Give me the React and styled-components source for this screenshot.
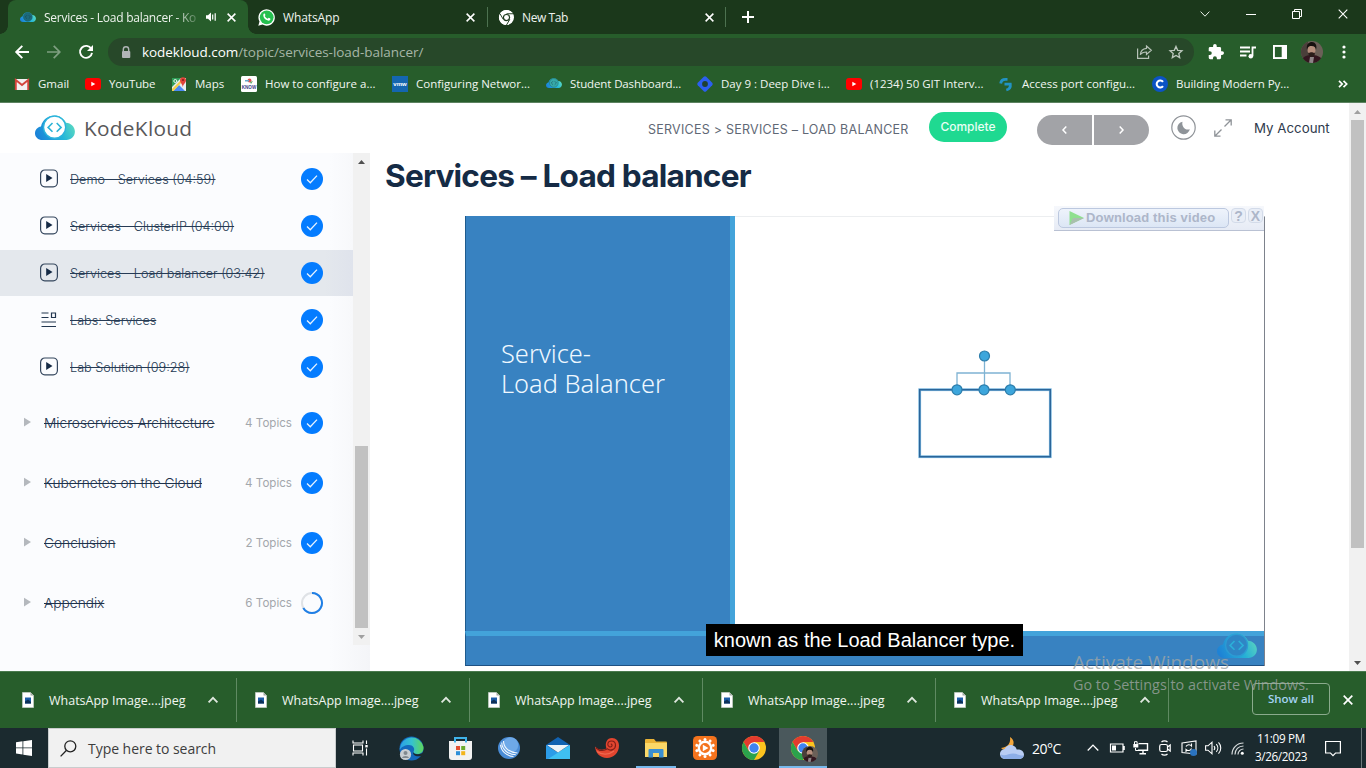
import React, { useId } from "react";
import styled, { createGlobalStyle, css } from "styled-components";

const Global = createGlobalStyle`
  * { box-sizing: border-box; }
  html, body { margin: 0; padding: 0; overflow: hidden; }
  svg { display: block; flex: none; overflow: visible; }
`;

const ui = `"Open Sans", "Noto Sans", sans-serif`;
const web = `Inter, "Liberation Sans", sans-serif`;

const Screen = styled.div`
  width: 1366px;
  height: 768px;
  display: flex;
  flex-direction: column;
  background: #fff;
  font-family: ${ui};
  font-size: 12px;
  overflow: hidden;
`;

const Txt = styled.span`
  white-space: nowrap;
  letter-spacing: ${(p) => p.$ls || 0}px;
`;

const Cell = styled.div`
  width: ${(p) => p.$w}px;
  flex: none;
  display: flex;
  align-items: center;
  justify-content: center;
`;

/* ---------- shared drawings ---------- */

function Cloud({ w = 40, ring = "#fff", code = "#2bb3d6", edge = "#2bb3dc" }) {
  const id = useId().replace(/[^a-zA-Z0-9]/g, "");
  return (
    <svg width={w} height={w * 0.64} viewBox="0 0 40 25.6">
      <defs>
        <linearGradient id={id} x1="0" x2="1" y1="0.6" y2="0.3">
          <stop offset="0" stopColor="#1c83d8" />
          <stop offset="0.55" stopColor="#23b5d9" />
          <stop offset="1" stopColor="#5fdcbf" />
        </linearGradient>
      </defs>
      <path
        d="M7.5 25C3 25 0 22 0 18.2c0-3.600 2.600-6.200 6-6.700C7.500 5 12.800.6 19.400.6c5.200 0 9.400 2.700 11.600 7.200 5 .3 8.900 4 8.900 8.700 0 4.900-3.700 8.500-8.500 8.500z"
        fill={`url(#${id})`}
      />
      <circle cx="19.600" cy="12.200" r="11" fill={ring} stroke={edge} strokeWidth="1.200" />
      <path d="M17.500 8l-4.400 4.400 4.400 4.400M21.700 8l4.400 4.400-4.400 4.400" fill="none" stroke={code} strokeWidth="1.600" />
    </svg>
  );
}

const Cross = ({ s = 9, c = "#fff", w = 1.7 }) => (
  <svg width={s} height={s} viewBox="0 0 10 10">
    <path d="M.7.7l8.600 8.600M9.300.7L.7 9.300" stroke={c} strokeWidth={w} fill="none" />
  </svg>
);

const Chevron = ({ w = 10, c = "#dfe8df", sw = 1.8, down }) => (
  <svg width={w} height={w * 0.6} viewBox="0 0 10 6">
    <path d={down ? "M.6.6L5 5.200 9.400.6" : "M.6 5.400L5 .9l4.400 4.500"} stroke={c} strokeWidth={sw} fill="none" />
  </svg>
);

const Chrome = ({ s = 24, mono }) => {
  const [r, g, y, b, w] = mono
    ? ["#fff", "#fff", "#fff", "#fff", "#1b381b"]
    : ["#e33b2e", "#2ba24c", "#fcc31e", "#3f83f1", "#fff"];
  return (
    <svg width={s} height={s} viewBox="0 0 24 24">
      <circle cx="12" cy="12" r="12" fill={y} />
      <path d="M12 12V6h10.400A12 12 0 0 0 1.600 6l5.200 9z" fill={r} />
      <path d="M12 12L6.800 15 1.600 6A12 12 0 0 0 12 24l5.200-9z" fill={g} />
      {mono && <path d="M12 6h10.400M6.800 15L1.600 6M17.200 15L12 24" stroke={w} strokeWidth="1.500" />}
      <circle cx="12" cy="12" r="5.800" fill={w} />
      <circle cx="12" cy="12" r={mono ? 3.900 : 4.700} fill={b} />
    </svg>
  );
};

const Face = ({ s }) => {
  const id = useId().replace(/[^a-zA-Z0-9]/g, "");
  return (
    <svg width={s} height={s} viewBox="0 0 22 22">
      <clipPath id={id}>
        <circle cx="11" cy="11" r="11" />
      </clipPath>
      <g clipPath={`url(#${id})`}>
        <path d="M0 0h22v22H0z" fill="#6b6058" />
        <path d="M0 0h7v22H0z" fill="#4a3f3a" />
        <path d="M0 22c1-6 5-8 10-8s10 1 12 6v2z" fill="#33161f" />
        <path d="M8 22l1-6h4l-1 6z" fill="#8e8588" />
        <ellipse cx="10.500" cy="9" rx="4" ry="5.500" fill="#b58e7c" />
        <path d="M6 9C5 3 8 1 11 1s5.500 3 4 8c-.5-3-1.500-4-4.500-4S7 6 6 9z" fill="#17110f" />
        <path d="M7 11.500c1 1 2-.3 3.500-.3s2.500 1.300 3.500.3c0 3-1.500 4.500-3.500 4.500S7 14.500 7 11.500z" fill="#2b1d1a" />
      </g>
    </svg>
  );
};

/* ---------- browser: tabs ---------- */

const TabStrip = styled.div`
  height: 34px;
  flex: none;
  display: flex;
  background: #1b381b;
  padding-left: 8px;
  color: #eef3ee;
`;
const Tab = styled.div`
  width: ${(p) => p.$w}px;
  height: 34px;
  display: flex;
  align-items: center;
  position: relative;
  padding: 0 ${(p) => p.$pr}px 0 ${(p) => p.$pl}px;
  font-size: 12px;
  ${(p) =>
    p.$active &&
    css`
      background: #275d2b;
      border-radius: 8px 8px 0 0;
      &::before,
      &::after {
        content: "";
        position: absolute;
        bottom: 0;
        width: 8px;
        height: 8px;
      }
      &::before {
        left: -8px;
        background: radial-gradient(circle at 0 0, transparent 7.5px, #275d2b 8px);
      }
      &::after {
        right: -8px;
        background: radial-gradient(circle at 100% 0, transparent 7.5px, #275d2b 8px);
      }
    `}
`;
const TabTitle = styled(Txt)`
  flex: 1;
  margin-left: 8px;
  ${(p) => p.$fade && "mask-image: linear-gradient(90deg, #000 86%, rgba(0,0,0,.2) 100%);"}
`;
const Speaker = styled.div`
  margin: 0 10px 0 9px;
`;
const Divider = styled.div`
  width: 1px;
  height: ${(p) => p.$h}px;
  background: #4d7250;
  align-self: center;
  flex: none;
`;
const PlusBox = styled.div`
  padding: 0 0 0 16px;
  align-self: center;
`;
const WindowControls = styled.div`
  margin-left: auto;
  display: flex;
  height: 28px;
`;

/* ---------- browser: toolbar ---------- */

const Toolbar = styled.div`
  height: 36px;
  flex: none;
  background: #275d2b;
  display: flex;
  align-items: center;
  padding: 0 6px;
`;
const Address = styled.div`
  width: 1086px;
  height: 28px;
  margin: 0 6px;
  border-radius: 14px;
  background: #274829;
  display: flex;
  align-items: center;
  padding: 0 2px 0 13px;
  color: #a6b6a7;
  font-size: 13.5px;
`;
const Url = styled(Txt)`
  flex: 1;
  margin-left: 11px;
  b {
    font-weight: 400;
    color: #fff;
  }
`;

/* ---------- browser: bookmarks ---------- */

const BookmarkBar = styled.div`
  height: 33px;
  flex: none;
  background: #275d2b;
  border-bottom: 1px solid #5c8260;
  display: flex;
  align-items: center;
  padding: 0 0 5px 14px;
  color: #f1f6f1;
`;
const Bookmark = styled.div`
  width: ${(p) => p.$w}px;
  flex: none;
  display: flex;
  align-items: center;
  gap: 8px;
  font-size: 11.5px;
`;
const More = styled.div`
  margin-left: auto;
  padding-right: 18px;
`;

const YT = () => (
  <svg width="16" height="16" viewBox="0 0 16 16">
    <rect y="2" width="16" height="12" rx="3" fill="#f00" />
    <path d="M6.300 5.700v4.600l4-2.300z" fill="#fff" />
  </svg>
);

const marks = {
  gmail: (
    <svg width="16" height="16" viewBox="0 0 16 16">
      <path d="M1 3h14v11H1z" fill="#f3f1f1" />
      <path d="M1.800 14V4l6.200 5 6.200-5v10" fill="none" stroke="#d3453c" strokeWidth="1.900" />
    </svg>
  ),
  yt: <YT />,
  maps: (
    <svg width="16" height="16" viewBox="0 0 16 16">
      <path d="M1 2h14v13H1z" fill="#e8eef0" />
      <path d="M1 2h9L1 11z" fill="#2f9d58" />
      <path d="M2 15l6-6 6 6z" fill="#4a8af4" />
      <path d="M1 13l9-9 1.500 1.500L2.500 15H1z" fill="#f4cf4a" />
      <circle cx="4.300" cy="5" r="1.500" fill="none" stroke="#fff" strokeWidth=".9" />
      <path d="M11.800 11C11.500 8 9 7 9 4.200a3 3 0 0 1 6 0C15 7 12.300 8 11.800 11z" fill="#e0453a" />
      <circle cx="12" cy="4" r="1.100" fill="#8b1f18" />
    </svg>
  ),
  know: (
    <svg width="16" height="16" viewBox="0 0 16 16">
      <rect width="16" height="16" rx="1.500" fill="#fff" />
      <circle cx="8.500" cy="4.500" r="2" fill="#e05252" />
      <path d="M4 4h4v1.500H4z" fill="#68a7c9" />
      <path d="M9 6l3-1-2 3z" fill="#5da865" />
      <text x="8" y="13.400" textAnchor="middle" fontSize="4.600" fontWeight="700" fill="#3c4488" fontFamily="Liberation Sans">KNOW</text>
    </svg>
  ),
  vmw: (
    <svg width="16" height="16" viewBox="0 0 16 16">
      <path d="M0 0h16v16H0z" fill="#1466b0" />
      <text x="8" y="10" textAnchor="middle" fontSize="6" fontWeight="700" fill="#fff" fontFamily="Liberation Sans">vmw</text>
    </svg>
  ),
  cloud: <Cloud w={16} ring="#36a9a8" code="#1c5964" edge="#1f6c74" />,
  day: (
    <svg width="16" height="16" viewBox="0 0 16 16">
      <rect x="2" y="2" width="12" height="12" rx="1.800" transform="rotate(45 8 8)" fill="#2b5ff0" />
      <circle cx="8" cy="8" r="2.900" fill="#1f4032" />
    </svg>
  ),
  port: (
    <svg width="16" height="16" viewBox="0 0 16 16">
      <path d="M9.500 3.300H7.500c-2.800 0-4.500 1.200-4.800 4.200" fill="none" stroke="#2293c4" strokeWidth="2.800" />
      <path d="M6.500 8.200h5.800c.4 3-.8 5-4 5.800" fill="none" stroke="#2293c4" strokeWidth="2.800" />
    </svg>
  ),
  c: (
    <svg width="16" height="16" viewBox="0 0 16 16">
      <circle cx="8" cy="8" r="8" fill="#0b53c4" />
      <path d="M11 5.900a3.500 3.500 0 1 0 0 4.200" fill="none" stroke="#fff" strokeWidth="2.100" />
    </svg>
  ),
};

const bookmarks = [
  ["gmail", "Gmail", 71, 0],
  ["yt", "YouTube", 86, -0.15],
  ["maps", "Maps", 70, 0],
  ["know", "How to configure a...", 151, 0],
  ["vmw", "Configuring Networ...", 154, 0],
  ["cloud", "Student Dashboard...", 151, -0.12],
  ["day", "Day 9 : Deep Dive i...", 149, 0],
  ["yt", "(1234) 50 GIT Interv...", 152, 0],
  ["port", "Access port configu...", 154, 0],
  ["c", "Building Modern Py...", 150, -0.02],
];

function Browser() {
  return (
    <>
      <TabStrip>
        <Tab $active $w={240} $pl={12} $pr={12}>
          <Cloud w={16} ring="#1d6a7c" code="#164a52" edge="#175865" />
          <TabTitle $fade $ls={-0.25}>Services - Load balancer - Ko</TabTitle>
          <Speaker>
            <svg width="11" height="10" viewBox="0 0 11 10">
              <path d="M0 3.200h2L5 .5v9L2 6.800H0z" fill="#fff" />
              <path d="M6.700 2.500v5M9.200 1.200v7.600" stroke="#fff" strokeWidth="1.200" />
            </svg>
          </Speaker>
          <Cross />
        </Tab>
        <Tab $w={239} $pl={10} $pr={12}>
          <svg width="17" height="17" viewBox="0 0 17 17">
            <path d="M.3 16.800l1.200-4.200A8.200 8.200 0 1 1 4.500 15.600z" fill="#fff" />
            <circle cx="8.700" cy="8.300" r="6.900" fill="#25c04f" />
            <path d="M5.700 4.800c.8-.7 1.300-.2 1.800 1.300l-.7 1c.7 1.400 1.700 2.200 2.900 2.700l1-1c1.900.8 2 1 1.500 2-.8 1.200-2.500 1-4.200 0C6.300 9.700 4.500 7 5.700 4.800z" fill="#fff" />
          </svg>
          <TabTitle $ls={-0.1}>WhatsApp</TabTitle>
          <Cross />
        </Tab>
        <Divider $h={20} />
        <Tab $w={237} $pl={11} $pr={11}>
          <Chrome s={15} mono />
          <TabTitle $ls={-0.4}>New Tab</TabTitle>
          <Cross />
        </Tab>
        <Divider $h={20} />
        <PlusBox>
          <svg width="12" height="12" viewBox="0 0 12 12">
            <path d="M6 0v12M0 6h12" stroke="#fff" strokeWidth="2" />
          </svg>
        </PlusBox>
        <WindowControls>
          <Cell $w={46}><Chevron down sw={1} c="#e8efe8" /></Cell>
          <Cell $w={46}>
            <svg width="10" height="10" viewBox="0 0 10 10"><path d="M0 5.500h10" stroke="#fff" /></svg>
          </Cell>
          <Cell $w={46}>
            <svg width="10" height="10" viewBox="0 0 10 10" fill="none" stroke="#fff">
              <path d="M.5 2.500h7v7h-7zM2.500 2.500v-2h7v7h-2" />
            </svg>
          </Cell>
          <Cell $w={46}><Cross s={10} w={1.1} /></Cell>
        </WindowControls>
      </TabStrip>
      <Toolbar>
        <Cell $w={32}>
          <svg width="14" height="14" viewBox="0 0 14 14" fill="none" stroke="#fff" strokeWidth="1.900">
            <path d="M14 7H1.500M7.300.8L1.200 7l6.100 6.200" />
          </svg>
        </Cell>
        <Cell $w={32}>
          <svg width="14" height="14" viewBox="0 0 14 14" fill="none" stroke="#7f9f81" strokeWidth="1.700">
            <path d="M0 7h12.500M6.700.8L12.800 7l-6.100 6.200" />
          </svg>
        </Cell>
        <Cell $w={32}>
          <svg width="14" height="14" viewBox="0 0 14 14">
            <path d="M12.300 3.900A6 6 0 1 0 13 7.800" fill="none" stroke="#fff" strokeWidth="1.900" />
            <path d="M14 0v6H8z" fill="#fff" />
          </svg>
        </Cell>
        <Address>
          <svg width="10" height="13" viewBox="0 0 10 13">
            <path d="M2.300 5.500V3.500a2.700 2.700 0 0 1 5.400 0v2" fill="none" stroke="#b0b5b6" strokeWidth="1.400" />
            <rect x="1" y="5" width="8.300" height="7" rx="1" fill="#b0b5b6" />
          </svg>
          <Url $ls={-0.05}><b>kodekloud.com</b>/topic/services-load-balancer/</Url>
          <Cell $w={32}>
            <svg width="15" height="14" viewBox="0 0 15 14" fill="none" stroke="#b6c2b7" strokeWidth="1.200">
              <path d="M.6 3.500v9.800h11V10.500M9.500 1l4.800 4.200-4.800 4.200V7C6 7 4.200 8.300 3.300 9.800 3.600 6 6 3.700 9.500 3.300z" />
            </svg>
          </Cell>
          <Cell $w={32}>
            <svg width="14" height="14" viewBox="0 0 14 14" fill="none" stroke="#bcc8bd" strokeWidth="1.300">
              <path d="M7 1.400l1.700 3.900 4.300.4-3.200 2.800.9 4.100L7 10.500l-3.700 2.100.9-4.100L1 5.700l4.300-.4z" />
            </svg>
          </Cell>
        </Address>
        <Cell $w={32}>
          <svg width="16" height="16" viewBox="1 1 22 22" fill="#fff">
            <path d="M20.500 11H19V7a2 2 0 0 0-2-2h-4V3.500a2.500 2.500 0 0 0-5 0V5H4a2 2 0 0 0-2 2v3.800h1.500a2.700 2.700 0 0 1 0 5.400H2V20a2 2 0 0 0 2 2h3.800v-1.500a2.700 2.700 0 0 1 5.400 0V22H17a2 2 0 0 0 2-2v-4h1.500a2.500 2.500 0 0 0 0-5z" />
          </svg>
        </Cell>
        <Cell $w={32}>
          <svg width="16" height="13" viewBox="0 0 16 13">
            <path d="M0 1.500h10M0 5.500h10M0 9.500h6.500M12.500 10V1.500H16" fill="none" stroke="#fff" strokeWidth="1.800" />
            <circle cx="10.800" cy="10.300" r="2.300" fill="#fff" />
          </svg>
        </Cell>
        <Cell $w={32}>
          <svg width="14" height="14" viewBox="0 0 14 14">
            <path d="M0 0h14v14H0z" fill="#fff" />
            <path d="M1.900 1.900h6.800v10.200H1.900z" fill="#275d2b" />
          </svg>
        </Cell>
        <Cell $w={32}><Face s={22} /></Cell>
        <Cell $w={32}>
          <svg width="4" height="14" viewBox="0 0 4 14" fill="#fff">
            <circle cx="2" cy="2" r="1.600" /><circle cx="2" cy="7" r="1.600" /><circle cx="2" cy="12" r="1.600" />
          </svg>
        </Cell>
      </Toolbar>
      <BookmarkBar>
        {bookmarks.map(([icon, label, w, ls]) => (
          <Bookmark key={label} $w={w}>
            {marks[icon]}
            <Txt $ls={ls}>{label}</Txt>
          </Bookmark>
        ))}
        <More>
          <svg width="10" height="8" viewBox="0 0 10 8" fill="none" stroke="#fff" strokeWidth="1.700">
            <path d="M1 .8L4.200 4 1 7.200M5.500.8L8.700 4 5.500 7.200" />
          </svg>
        </More>
      </BookmarkBar>
    </>
  );
}

/* ---------- web page ---------- */

const Page = styled.div`
  height: 568px;
  flex: none;
  display: flex;
  font-family: ${web};
`;
const PageBody = styled.div`
  width: 1349px;
  display: flex;
  flex-direction: column;
`;
const Header = styled.header`
  height: 50px;
  flex: none;
  display: flex;
  align-items: center;
  padding-left: 35px;
`;
const Brand = styled(Txt)`
  width: 573px;
  padding-left: 9px;
  font-family: ${ui};
  font-size: 20.8px;
  line-height: 24px;
  color: #58585a;
`;
const Crumbs = styled(Txt)`
  width: 281px;
  font-size: 12.5px;
  color: #5f6875;
  padding-top: 3px;
`;
const Complete = styled.div`
  width: 78px;
  height: 30px;
  border-radius: 15px;
  background: #1fd991;
  color: #e9fff5;
  font-size: 12px;
  font-weight: 500;
  line-height: 30px;
  text-align: center;
  margin-bottom: 2px;
`;
const Pager = styled.div`
  display: flex;
  gap: 2px;
  margin: 4px 22px 0 30px;
`;
const PagerButton = styled.div`
  width: 55px;
  height: 30px;
  background: #a2a3a7;
  border-radius: ${(p) => (p.$right ? "0 15px 15px 0" : "15px 0 0 15px")};
  display: flex;
  align-items: center;
  justify-content: center;
`;
const Expand = styled.div`
  margin: 0 22px 0 18px;
`;
const Account = styled(Txt)`
  font-size: 13.3px;
  color: #2f3b4d;
`;

const Columns = styled.div`
  flex: 1;
  min-height: 0;
  display: flex;
`;
const Side = styled.aside`
  width: 370px;
  flex: none;
  display: flex;
  align-items: flex-start;
  background: linear-gradient(90deg, #fbfcfe 330px, #f4f5f8 370px);
`;
const SideList = styled.div`
  width: 353px;
  padding-top: 3px;
`;
const Lesson = styled.div`
  height: 46px;
  margin-bottom: 1px;
  padding: 0 30px 0 39px;
  display: flex;
  align-items: center;
  background: ${(p) =>
    p.$active ? "linear-gradient(90deg, #e4e8ed 325px, #dfe3ec 353px)" : "transparent"};
`;
const LessonName = styled(Txt)`
  flex: 1;
  margin-left: 11px;
  font-size: 12.65px;
  font-weight: 300;
  color: #263b55;
  text-decoration: line-through;
`;
const LessonIcon = styled.div`
  width: 20px;
  padding-bottom: 2px;
`;
const Sections = styled.div`
  padding-top: 2px;
`;
const Section = styled.div`
  height: 60px;
  padding: 0 30px 0 23px;
  display: flex;
  align-items: center;
`;
const SectionName = styled(Txt)`
  flex: 1;
  margin-left: 13px;
  font-size: 13.7px;
  font-weight: 300;
  color: #1d324c;
  text-decoration: line-through;
`;
const Topics = styled(Txt)`
  font-size: 11.6px;
  color: #a3a7ac;
  margin-right: 9px;
`;

const Bar = styled.div`
  width: 17px;
  height: ${(p) => p.$h};
  flex: none;
  background: #f1f1f1;
  display: flex;
  flex-direction: column;
  align-items: center;
  justify-content: space-between;
`;
const BarEnd = styled.div`
  height: 17px;
  display: flex;
  align-items: center;
`;
const Thumb = styled.div`
  width: 13px;
  height: ${(p) => p.$size}px;
  margin-top: ${(p) => p.$top}px;
  margin-bottom: auto;
  background: #c1c1c1;
`;

const Triangle = ({ down, c }) => (
  <svg width="7" height="4" viewBox="0 0 7 4">
    <path d={down ? "M0 0h7L3.500 4z" : "M0 4h7L3.500 0z"} fill={c} />
  </svg>
);

function Scrollbar({ h, top, size, up, down }) {
  return (
    <Bar $h={h}>
      <BarEnd><Triangle c={up} /></BarEnd>
      <Thumb $top={top} $size={size} />
      <BarEnd><Triangle down c={down} /></BarEnd>
    </Bar>
  );
}

const Done = () => (
  <svg width="22" height="22" viewBox="0 0 22 22">
    <circle cx="11" cy="11" r="11" fill="#047cff" />
    <path d="M6 11.500l3.300 3.300L16 7.600" fill="none" stroke="#e8f3ff" strokeWidth="1.300" />
  </svg>
);
const Partial = () => (
  <svg width="22" height="22" viewBox="0 0 22 22" fill="none" strokeWidth="2">
    <circle cx="11" cy="11" r="10" stroke="#dfe2e6" />
    <path d="M11 1a10 10 0 1 1-8.700 15" stroke="#1f7fe6" />
  </svg>
);
const Play = () => (
  <svg width="20" height="19" viewBox="0 0 20 19">
    <rect x="1.600" y="1" width="16.800" height="16.800" rx="4.200" fill="none" stroke="#34465d" strokeWidth="1.200" />
    <path d="M7.200 5v8l6.300-4z" fill="#152a45" />
  </svg>
);
const Lab = () => (
  <svg width="20" height="19" viewBox="0 0 20 19" fill="none" stroke="#22364f" strokeWidth="1.200">
    <path d="M2.500 3h7M2.500 7.500h7M2.500 12h14.500M2.500 16.500h14.500M12.500 3h4v4.500h-4z" />
  </svg>
);

const Main = styled.main`
  flex: 1;
  padding-left: 15px;
`;
const Title = styled.h1`
  margin: 0;
  height: 63px;
  padding-top: 2px;
  font-size: 31.6px;
  line-height: 42px;
  font-weight: 700;
  color: #152b45;
  letter-spacing: ${(p) => p.$ls}px;
  white-space: nowrap;
`;
const Video = styled.div`
  position: relative;
  width: 800px;
  height: 450px;
  margin-left: 80px;
  display: flex;
  flex-direction: column;
  border-top: 1px solid #eceef0;
  border-right: 1px solid #7d828c;
`;
const SlideTop = styled.div`
  height: 414px;
  display: flex;
`;
const SlidePanel = styled.div`
  width: 270px;
  background: #3882c1;
  border-right: 5px solid #43a3da;
  border-left: 1px solid #1f5b8d;
  margin-top: -1px;
  padding: 122px 0 0 35px;
  color: #eff8ff;
  font-family: "Noto Sans", ${ui};
  font-weight: 300;
  font-size: 25.4px;
  line-height: 30px;
`;
const SlideCanvas = styled.div`
  flex: 1;
  padding: 133px 0 0 183px;
`;
const SlideFoot = styled.div`
  height: 35px;
  background: #3882c1;
  border-top: 5px solid #43a3da;
  border-bottom: 1px solid #1f5183;
  border-left: 1px solid #1f5b8d;
`;
const VideoLogo = styled.div`
  position: absolute;
  right: 7px;
  bottom: 7px;
  opacity: 0.9;
`;
const Caption = styled.div`
  position: absolute;
  left: 241px;
  top: 407px;
  width: 317px;
  height: 32px;
  background: #000;
  color: #fff;
  font: 20px/32px "Liberation Sans", sans-serif;
  text-align: center;
  white-space: nowrap;
`;
const Grabber = styled.div`
  position: absolute;
  right: 0;
  top: -11px;
  width: 210px;
  height: 25px;
  background: linear-gradient(#f6f8fc, #e6ebf5);
  border-bottom: 1px solid #b9c1d3;
  display: flex;
  align-items: flex-start;
  gap: 2px;
  padding: 2px 0 0 4px;
  font-family: "Liberation Sans", sans-serif;
  font-weight: 700;
  color: #adb6c9;
`;
const GrabButton = styled.div`
  width: 171px;
  height: 20px;
  border: 1px solid #bcc8df;
  border-radius: 5px;
  background: linear-gradient(#eef3fb, #dce6f5);
  display: flex;
  align-items: center;
  gap: 2px;
  padding: 0 0 1px 10px;
  font-size: 13px;
`;
const GrabSmall = styled.div`
  width: 15px;
  height: 15px;
  border-radius: 4px;
  border: 1px solid #d3dbe9;
  background: #e9eef7;
  font-size: 14px;
  line-height: 14px;
  text-align: center;
`;

const Diagram = () => (
  <svg width="134" height="108" viewBox="918 350 134 108">
    <path d="M984.500 356v34M957 390v-17h53v17" fill="none" stroke="#7fb3d3" strokeWidth="1.300" />
    <rect x="919.700" y="389.700" width="130.600" height="67" fill="#fff" stroke="#7fbbe2" strokeWidth="2.800" />
    <rect x="919.700" y="389.700" width="130.600" height="67" fill="none" stroke="#2b6599" strokeWidth="1.500" />
    {[[984.5, 356], [957, 389.800], [984, 389.800], [1010.3, 389.800]].map(([x, y], i) => (
      <circle key={i} cx={x} cy={y} r="5" fill="#3da6dc" stroke="#2c7dab" strokeWidth="1.200" />
    ))}
  </svg>
);

const lessons = [
  "Demo - Services (04:59)",
  "Services - ClusterIP (04:00)",
  "Services - Load balancer (03:42)",
  "Labs: Services",
  "Lab Solution (09:28)",
];
const sections = [
  ["Microservices Architecture", 4],
  ["Kubernetes on the Cloud", 4],
  ["Conclusion", 2],
  ["Appendix", 6],
];

function WebPage() {
  return (
    <Page>
      <PageBody>
        <Header>
          <Cloud w={40} />
          <Brand $ls={0.3}>KodeKloud</Brand>
          <Crumbs $ls={0.24}>SERVICES &gt; SERVICES – LOAD BALANCER</Crumbs>
          <Complete>Complete</Complete>
          <Pager>
            <PagerButton>
              <svg width="5" height="8" viewBox="0 0 5 8"><path d="M4.300.6L1 4l3.300 3.400" fill="none" stroke="#fff" strokeWidth="1.500" /></svg>
            </PagerButton>
            <PagerButton $right>
              <svg width="5" height="8" viewBox="0 0 5 8"><path d="M.7.6L4 4 .7 7.400" fill="none" stroke="#fff" strokeWidth="1.500" /></svg>
            </PagerButton>
          </Pager>
          <svg width="25" height="28" viewBox="0 1 25 28">
            <circle cx="12.500" cy="14.500" r="11.700" fill="none" stroke="#8f9398" strokeWidth="1.200" />
            <path d="M11.500 8.700a6.300 6.300 0 1 0 7.300 7.500c-4.300 1.600-8.500-2.500-7.300-7.500z" fill="#8f9499" />
          </svg>
          <Expand>
            <svg width="18" height="18" viewBox="0 0 18 18" fill="none" stroke="#8f9398" strokeWidth="1.300">
              <path d="M10.500 7.500L17 1M11.500.8h5.700v5.700M7.500 10.500L1 17M.8 11.500v5.700h5.700" />
            </svg>
          </Expand>
          <Account>My Account</Account>
        </Header>
        <Columns>
          <Side>
            <SideList>
              {lessons.map((name, i) => (
                <Lesson key={name} $active={i === 2}>
                  <LessonIcon>{i === 3 ? <Lab /> : <Play />}</LessonIcon>
                  <LessonName>{name}</LessonName>
                  <Done />
                </Lesson>
              ))}
              <Sections>
                {sections.map(([name, n], i) => (
                  <Section key={name}>
                    <svg width="8" height="12" viewBox="0 0 8 12"><path d="M1 .8v8.600L8 5.100z" fill="#b4b8bd" /></svg>
                    <SectionName>{name}</SectionName>
                    <Topics>{n} Topics</Topics>
                    {i === 3 ? <Partial /> : <Done />}
                  </Section>
                ))}
              </Sections>
            </SideList>
            <Scrollbar h="492px" top={276} size={182} up="#505050" down="#a0a0a0" />
          </Side>
          <Main>
            <Title $ls={-0.8}>Services – Load balancer</Title>
            <Video>
              <SlideTop>
                <SlidePanel>
                  <Txt>Service-</Txt>
                  <br />
                  <Txt>Load Balancer</Txt>
                </SlidePanel>
                <SlideCanvas><Diagram /></SlideCanvas>
              </SlideTop>
              <SlideFoot />
              <VideoLogo><Cloud w={40} ring="#2f86c6" code="#2bb5dc" edge="#2b9fd6" /></VideoLogo>
              <Caption>known as the Load Balancer type.</Caption>
              <Grabber>
                <GrabButton>
                  <svg width="15" height="14" viewBox="0 0 15 14">
                    <path d="M.5 0L15 7 .5 14z" fill="#8fe08f" />
                    <path d="M.5 14L15 7H4z" fill="#a9bfae" />
                  </svg>
                  <Txt $ls={0.15}>Download this video</Txt>
                </GrabButton>
                <GrabSmall>?</GrabSmall>
                <GrabSmall>X</GrabSmall>
              </Grabber>
            </Video>
          </Main>
        </Columns>
      </PageBody>
      <Scrollbar h="568px" top={0} size={428} up="#a0a0a0" down="#505050" />
    </Page>
  );
}

/* ---------- downloads ---------- */

const Downloads = styled.div`
  height: 57px;
  flex: none;
  background: #275d2b;
  border-top: 1px solid #4a7a4e;
  display: flex;
  align-items: center;
  padding: 0 13px 0 4px;
  color: #f1f6f1;
`;
const Download = styled.div`
  width: 233px;
  height: 44px;
  display: flex;
  align-items: center;
  padding: 0 18px;
  border-right: 1px solid #5f8a62;
`;
const DownloadName = styled(Txt)`
  flex: 1;
  margin-left: 15px;
  font-size: 12.5px;
`;
const ShowAll = styled.div`
  width: 78px;
  height: 32px;
  margin: 0 13px 2px auto;
  border: 1px solid #8bab8d;
  border-radius: 4px;
  color: #a5d3f3;
  font-size: 11.5px;
  font-weight: 600;
  line-height: 30px;
  text-align: center;
`;

/* ---------- taskbar ---------- */

const Taskbar = styled.div`
  height: 40px;
  flex: none;
  background: #1b2a2f;
  display: flex;
  color: #fff;
`;
const Search = styled.div`
  width: 288px;
  background: #f1f1f1;
  border: 1px solid #c9cccd;
  color: #3d3d3d;
  display: flex;
  align-items: center;
  gap: 11px;
  padding-left: 11px;
  font-size: 14px;
`;
const Apps = styled.div`
  display: flex;
  margin-left: 3px;
`;
const AppSlot = styled.div`
  width: 48px;
  height: 40px;
  margin-right: 1px;
  display: flex;
  align-items: center;
  justify-content: center;
  background: ${(p) => (p.$active ? "#4a585c" : "transparent")};
  box-shadow: ${(p) => (p.$active ? "inset 0 -2px #77b8ec" : "none")};
`;
const Open = styled.div`
  width: 40px;
  height: 40px;
  display: flex;
  align-items: center;
  justify-content: center;
  box-shadow: inset 0 -2px #77b8ec;
`;
const Stack = styled.div`
  position: relative;
`;
const Badge = styled.div`
  position: absolute;
  right: -3px;
  bottom: -2px;
`;
const Weather = styled.div`
  margin-left: auto;
  width: 81px;
  display: flex;
  align-items: center;
  gap: 8px;
  font-size: 14px;
`;
const Clock = styled.div`
  width: 64px;
  text-align: center;
  font-size: 11.7px;
  line-height: 18px;
  padding-top: 1px;
`;
const Peek = styled.div`
  width: 5px;
  margin-left: 8px;
  border-left: 1px solid #6c787b;
`;

const Edge = () => (
  <svg width="25" height="25" viewBox="0 0 25 25">
    <defs>
      <linearGradient id="edgeTop" x1="0" x2="1">
        <stop offset="0" stopColor="#2b9fe8" />
        <stop offset=".5" stopColor="#35c2d0" />
        <stop offset="1" stopColor="#5fd75a" />
      </linearGradient>
    </defs>
    <circle cx="12.500" cy="12.500" r="12" fill="#1369bd" />
    <path d="M.8 12.500A12 12 0 0 1 24.500 11c.3 4.500-2.500 7-6 7-3 0-4.500-1.300-4-2.300C16.500 12.500 14 9 10 9c-4 0-8 2-9.200 5z" fill="url(#edgeTop)" />
    <path d="M25 14.500c-.8 2.500-3 3.700-6.500 3.700-2.500 0-4.500-1-4-2.500-1.700 3 2.500 5.500 7.500 4.300l3 1z" fill="#1b2a2f" />
    <circle cx="6.500" cy="18.500" r="5.600" fill="#c9ced2" />
    <circle cx="6.500" cy="17" r="2" fill="#81898f" />
    <path d="M3 22c.3-2.800 6.700-2.800 7 0z" fill="#81898f" />
  </svg>
);
const Store = () => (
  <svg width="23" height="23" viewBox="0 0 23 23">
    <path d="M0 4h23v16a3 3 0 0 1-3 3H3a3 3 0 0 1-3-3z" fill="#f2f2f2" />
    <path d="M6 5.500V1h11v4.500" fill="none" stroke="#3fb3ea" strokeWidth="2" />
    <path d="M7 9h4v4H7z" fill="#e25032" /><path d="M12.200 9h4v4h-4z" fill="#6cab2d" />
    <path d="M7 14.200h4v4H7z" fill="#2d8fd8" /><path d="M12.200 14.200h4v4h-4z" fill="#f3b51c" />
  </svg>
);
const Swirl = () => (
  <svg width="22" height="22" viewBox="0 0 22 22">
    <circle cx="11" cy="11" r="11" fill="#4a8cd6" />
    <circle cx="12.500" cy="8" r="7.800" fill="#6ea9e8" />
    <path d="M5.500 4c0 6 5 11.500 14 12M3.800 5.500c0 6.500 5.500 12 14 12.300M2.500 7.800c.5 6 5.500 11 13 11.700" stroke="#f2f8ff" strokeWidth="1.100" fill="none" />
  </svg>
);
const Mail = () => (
  <svg width="24" height="22" viewBox="0 0 24 22">
    <path d="M0 8L12 0l12 8v3H0z" fill="#1263b1" />
    <path d="M0 8l12 7.500L24 8v14H0z" fill="#2c9ce8" />
    <path d="M24 8v14H2z" fill="#3fc0f2" />
    <path d="M1 8h22l-11 7.500z" fill="#eef4f8" />
  </svg>
);
const Shell = () => (
  <svg width="24" height="20" viewBox="0 0 24 20">
    <path d="M0 8.500C3 12 8 12.500 11.500 10.500 9.500 5 12 0 17 0c4 0 7 3 7 7.500C24 15 18.500 20 12 20 5 20 .5 15 0 8.500z" fill="#e2452f" />
    <path d="M1 10c3.500 3 8 3 11.500.8 3 2.700 8 .7 8-3.600 0-2.700-2-4.200-4-4.200s-3.700 1.500-3.700 3.500 2.700 3.300 4 1.700c.7-1 0-2.200-1-2" stroke="#7e1d17" strokeWidth="1.100" fill="none" />
    <path d="M2 13.500c4.500 3.500 12 3.500 17-.5" stroke="#f0694f" strokeWidth="1.200" fill="none" />
  </svg>
);
const Folder = () => (
  <svg width="22" height="19" viewBox="0 0 22 19">
    <path d="M0 1a1 1 0 0 1 1-1h8l2 2.500h10a1 1 0 0 1 1 1V17H0z" fill="#eab336" />
    <path d="M0 4h22v14H0z" fill="#fbd868" />
    <path d="M3.500 18.500V11a1 1 0 0 1 1-1h13a1 1 0 0 1 1 1v7.500h-4.500V14H8v4.500z" fill="#3a8fd3" />
  </svg>
);
const Orange = () => (
  <svg width="24" height="24" viewBox="0 0 24 24">
    <rect width="24" height="24" rx="4.500" fill="#f4731d" />
    {[0, 36, 72, 108, 144, 180, 216, 252, 288, 324].map((a) => (
      <circle key={a} cx="12" cy="3.400" r="1.500" fill="#fff" transform={`rotate(${a} 12 12)`} />
    ))}
    <circle cx="12" cy="12" r="6.200" fill="none" stroke="#fff" strokeWidth="2.400" />
    <path d="M9.800 8.700v6.600l5.700-3.300z" fill="#fff" />
  </svg>
);
const Moonlight = () => (
  <svg width="24" height="24" viewBox="0 0 24 24">
    <path d="M10 1c5 3 5 9-1 12-3 1-6 1-8-1C8 11 11 7 10 1z" fill="#f4a73c" />
    <path d="M5.500 23A5 5 0 0 1 4.500 13c1.500-3 5-5 8.500-3.500 2 .8 3.200 2 3.700 4 3.500-.5 7.300 1.300 7.300 5 0 3-2.500 4.500-5 4.500z" fill="#b9cdf4" />
    <path d="M5 23a4.500 4.500 0 0 1-4-4.500c4 2 8-1 12-1s7 2.500 10.800 2C23 22 21 23 19 23z" fill="#8daee8" />
  </svg>
);

const tray = [
  <Chevron w={12} sw={1.1} c="#fff" />,
  <svg width="15" height="10" viewBox="0 0 15 10"><path d="M.5 1h12.500v8H.5zM14.200 3v4" stroke="#fff" strokeWidth="1.200" fill="none" /><path d="M2 2.500h4v5H2z" fill="#fff" /></svg>,
  <svg width="16" height="14" viewBox="0 0 16 14"><path d="M5.500 2.600h9v6.600H5M10 9.200v3M6.500 12.800H13" stroke="#fff" strokeWidth="1.400" fill="none" /><path d="M.3 3h5v3.500h-5z" fill="#fff" /><path d="M1.500 3V.7h2.600V3M2.500 7v2.500h3" stroke="#fff" fill="none" /></svg>,
  <svg width="12" height="16" viewBox="0 0 12 16" fill="none" stroke="#fff" strokeWidth="1.200"><path d="M2.500 2C4 .5 7 .5 8.500 2M2.500 14C4 15.500 7 15.500 8.500 14M8.500 7l2.700-2v6L8.500 9" /><rect x=".7" y="4.500" width="7.800" height="7" rx="1.800" /></svg>,
  <svg width="17" height="16" viewBox="0 0 17 16" fill="none" stroke="#fff" strokeWidth="1.100"><path d="M1 3L15 1v13L1 12.500z" /><path d="M5 6.500c1-2 4-2.500 5.500-.5V3.500M10.500 8.500C9.500 11 6.500 11 5 9.500V12" /><circle cx="12.500" cy="12.500" r="3.500" fill="#2a73c0" stroke="none" /></svg>,
  <svg width="17" height="14" viewBox="0 0 17 14" fill="none" stroke="#fff" strokeWidth="1.100"><path d="M.6 4.800h2.400L7 1.200v11.600L3 9.200H.6zM9 5c1 1.200 1 2.800 0 4M11.300 3.200c2 2.200 2 5.400 0 7.600M13.500 1.400c3 3.200 3 8 0 11.200" /></svg>,
  <svg width="13" height="13" viewBox="0 0 13 13" fill="none" stroke="#d7dcdd" strokeWidth="1.200"><path d="M1 12.500C1 6 6 1 12.500 1M4 12.500C4 7.500 7.500 4 12.500 4M7 12.500C7 9.500 9.500 7 12.500 7" /><circle cx="11.300" cy="11.300" r="1.500" fill="#fff" stroke="none" /></svg>,
];

const Watermark = styled.div`
  position: absolute;
  left: 1073px;
  top: 650px;
  color: rgba(160, 166, 166, 0.78);
  display: flex;
  flex-direction: column;
`;
const WaterBig = styled(Txt)`
  font-size: 19px;
  line-height: 24px;
`;
const WaterSmall = styled(Txt)`
  font-size: 14.4px;
  line-height: 21px;
`;

function Desktop() {
  return (
    <>
      <Downloads>
        {[0, 1, 2, 3, 4].map((n) => (
          <Download key={n}>
            <svg width="12" height="16" viewBox="0 0 12 16">
              <path d="M.5.500h8l3 3v12H.5z" fill="#fff" stroke="#c3cbc5" strokeWidth=".8" />
              <path d="M8.500.500v3h3z" fill="#9fa8a2" />
              <path d="M3 5.500h6v6H3z" fill="#1c5da8" />
              <path d="M3 11.500V9.500l3-2 3 2.500v1.500z" fill="#0e3158" />
            </svg>
            <DownloadName>WhatsApp Image....jpeg</DownloadName>
            <Chevron />
          </Download>
        ))}
        <ShowAll>Show all</ShowAll>
        <Cross s={10} />
      </Downloads>
      <Taskbar>
        <Cell $w={48}>
          <svg width="16" height="16" viewBox="0 0 16 16" fill="#fff">
            <path d="M0 2.200L6.500 1.300v6.200H0zM7.300 1.200L16 0v7.500H7.300zM0 8.300h6.500v6.200L0 13.600zM7.300 8.300H16V16l-8.700-1.200z" />
          </svg>
        </Cell>
        <Search>
          <svg width="17" height="17" viewBox="0 0 17 17" fill="none" stroke="#222" strokeWidth="1.300">
            <circle cx="10.300" cy="6.300" r="5.500" /><path d="M6.300 10.500L.6 16.400" />
          </svg>
          <Txt $ls={-0.04}>Type here to search</Txt>
        </Search>
        <Cell $w={48}>
          <svg width="16" height="16" viewBox="0 0 16 16" fill="none" stroke="#fff" strokeWidth="1.100">
            <path d="M1 .5v2.500h10V.5M1 15.500V13h10v2.500M1.500 5h9v6h-9zM14.500.5v3.500M14.500 8.500v7" />
            <path d="M13.300 5h2.400v2.400h-2.400z" fill="#fff" stroke="none" />
          </svg>
        </Cell>
        <Apps>
          <AppSlot><Edge /></AppSlot>
          <AppSlot><Store /></AppSlot>
          <AppSlot><Swirl /></AppSlot>
          <AppSlot><Mail /></AppSlot>
          <AppSlot><Shell /></AppSlot>
          <AppSlot><Open><Folder /></Open></AppSlot>
          <AppSlot><Orange /></AppSlot>
          <AppSlot><Chrome s={24} /></AppSlot>
          <AppSlot $active>
            <Stack><Chrome s={24} /><Badge><Face s={16} /></Badge></Stack>
          </AppSlot>
        </Apps>
        <Weather><Moonlight /><Txt $ls={-0.5}>20°C</Txt></Weather>
        {tray.map((icon, i) => <Cell key={i} $w={24}>{icon}</Cell>)}
        <Clock><Txt $ls={-0.3}>11:09 PM</Txt><br /><Txt $ls={-0.35}>3/26/2023</Txt></Clock>
        <Cell $w={40}>
          <svg width="16" height="17" viewBox="0 0 16 17" fill="none" stroke="#fff" strokeWidth="1.200">
            <path d="M.6 1.500h14.800v11.500H10.500L8 15.600 5.500 13H.6z" />
          </svg>
        </Cell>
        <Peek />
      </Taskbar>
    </>
  );
}

export default function App() {
  return (
    <Screen>
      <Global />
      <Browser />
      <WebPage />
      <Desktop />
      <Watermark>
        <WaterBig>Activate Windows</WaterBig>
        <WaterSmall>Go to Settings to activate Windows.</WaterSmall>
      </Watermark>
    </Screen>
  );
}
